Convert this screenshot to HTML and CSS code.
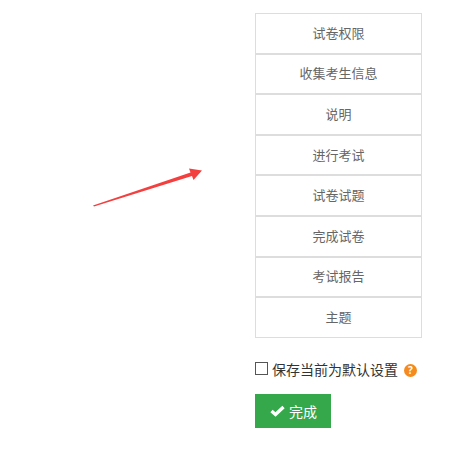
FILE: index.html
```html
<!DOCTYPE html>
<html lang="en">
<head>
    <meta charset="UTF-8">
    <title>试卷设置</title>
    <link rel="stylesheet" href="styles.css">
</head>
<body>
    <svg class="arrow" width="125" height="52" viewBox="85 160 125 52">
        <path d="M93 205.5 L190.5 172.5 L189 168.5 L202 170.5 L193.5 180 L192 176 L94 206.5 Z" fill="#f43f3f"/>
    </svg>

    <div class="panel">
        <ul class="steps">
            <li>试卷权限</li>
            <li>收集考生信息</li>
            <li>说明</li>
            <li>进行考试</li>
            <li>试卷试题</li>
            <li>完成试卷</li>
            <li>考试报告</li>
            <li>主题</li>
        </ul>

        <label class="default-setting">
            <span class="checkbox"></span>
            <span>保存当前为默认设置</span>
            <span class="help">?</span>
        </label>

        <button class="done-button">
            <svg width="15" height="12" viewBox="0 0 15 12">
                <path d="M1.5 6 L5.5 9.5 L13.5 2" fill="none" stroke="#fff" stroke-width="3.4"/>
            </svg>
            完成
        </button>
    </div>
</body>
</html>
```

FILE: styles.css
```css
body {
    margin: 0;
    background-color: #fff;
    font-family: "Open Sans", "Noto Sans CJK SC", sans-serif;
    color: #666;
}

.arrow {
    position: absolute;
    left: 85px;
    top: 160px;
}

.panel {
    width: 167px;
    margin-left: 255px;
    padding-top: 13px;
}

.steps {
    list-style: none;
    margin: 0;
    padding: 0;
    display: flex;
    flex-direction: column;
}

.steps li {
    height: 40.6px;
    box-sizing: border-box;
    border: 1px solid #ddd;
    padding-bottom: 2px;
    display: flex;
    align-items: center;
    justify-content: center;
    font-size: 13px;
}

.default-setting {
    display: flex;
    align-items: center;
    margin-top: 21px;
    font-size: 14px;
    color: #333;
    white-space: nowrap;
}

.checkbox {
    width: 11px;
    height: 11px;
    border: 1px solid #555;
    margin-right: 4px;
}

.help {
    width: 13px;
    height: 13px;
    margin: 4px 0 0 6px;
    border-radius: 50%;
    background-color: #f58a1f;
    color: #fff;
    font-size: 10px;
    font-weight: bold;
    line-height: 13px;
    text-align: center;
}

.done-button {
    display: flex;
    align-items: center;
    gap: 4px;
    width: 76px;
    height: 34px;
    margin-top: 15px;
    padding: 0 0 0 15px;
    border: none;
    background-color: #34a84a;
    color: #fff;
    font-family: inherit;
    font-size: 14px;
}
```
